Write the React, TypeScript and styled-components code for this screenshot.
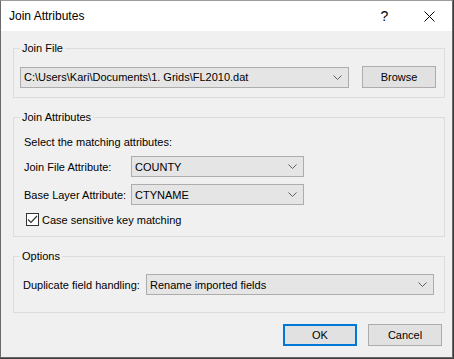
import styled, { createGlobalStyle } from 'styled-components';

const GlobalStyle = createGlobalStyle`
    body {
        margin: 0;
        background: #3c3c3c;
        font-family: "Liberation Sans", Arial, sans-serif;
    }
`

const Window = styled.div`
    width: 453px;
    height: 358px;
    box-sizing: border-box;
    border: 1px solid #6a6a6a;
    border-top-color: #9c9c9c;
    background: #f0f0f0;
    display: flex;
    flex-direction: column;
`

const TitleBar = styled.div`
    height: 30px;
    background: #ffffff;
    display: flex;
    align-items: center;
    flex-shrink: 0;
`

const Title = styled.div`
    flex: 1;
    padding-left: 8px;
    font-size: 12px;
    color: #000;
`

const TitleButton = styled.div`
    width: 45px;
    height: 30px;
    display: flex;
    align-items: center;
    justify-content: center;
    font-size: 14px;
    color: #000;
`

const Body = styled.div`
    flex: 1;
    padding: 10px 9px 0 12px;
    display: flex;
    flex-direction: column;
`

const Group = styled.fieldset<{ $gap?: number }>`
    margin: 0 0 ${props => props.$gap ?? 0}px 0;
    padding: 0;
    border: 1px solid #dcdcdc;
    min-width: 0;
    width: 432px;
    box-sizing: border-box;
`

const Legend = styled.legend`
    font-size: 11px;
    line-height: 14px;
    padding: 0 2px;
    margin-left: 6px;
    color: #000;
`

const FileRow = styled.div`
    display: flex;
    align-items: center;
    gap: 13px;
    padding: 11px 8px 9px 6px;
`

const Combo = styled.div<{ $width?: number }>`
    ${props => props.$width ? `width: ${props.$width}px;` : 'flex: 1;'}
    height: 21px;
    box-sizing: border-box;
    border: 1px solid #adadad;
    background: #e5e5e5;
    display: flex;
    align-items: center;
    padding: 0 6px 0 3px;
    font-size: 11px;
    color: #000;
`

const ComboText = styled.span`
    flex: 1;
    white-space: nowrap;
    overflow: hidden;
`

const Button = styled.div<{ $default?: boolean }>`
    width: 74px;
    height: 22px;
    box-sizing: border-box;
    border: ${props => props.$default ? '2px solid #0078d7' : '1px solid #adadad'};
    background: #e1e1e1;
    display: flex;
    align-items: center;
    justify-content: center;
    font-size: 11px;
    color: #000;
`

const AttrBody = styled.div`
    padding: 12px 10px 10px 10px;
    display: flex;
    flex-direction: column;
`

const Hint = styled.div`
    font-size: 11px;
    color: #000;
    margin-bottom: 8px;
`

const AttrGrid = styled.div`
    display: grid;
    grid-template-columns: 107px 173px;
    row-gap: 7px;
    align-items: center;
    margin-bottom: 8px;
`

const Label = styled.div`
    font-size: 11px;
    color: #000;
    white-space: nowrap;
`

const CheckRow = styled.div`
    display: flex;
    align-items: center;
    gap: 3px;
    padding-left: 2px;
    font-size: 11px;
`

const CheckBox = styled.div`
    width: 13px;
    height: 13px;
    box-sizing: border-box;
    border: 1px solid #333;
    background: #fff;
    display: flex;
    align-items: center;
    justify-content: center;
`

const OptionsRow = styled.div`
    display: flex;
    align-items: center;
    justify-content: space-between;
    padding: 11px 10px 17px 9px;
`

const Footer = styled.div`
    display: flex;
    justify-content: flex-end;
    gap: 11px;
    padding: 11px 1px 0 0;
`

const Chevron = () => (
    <svg width="9" height="5" viewBox="0 0 9 5">
        <path d="M0.5 0.5 L4.5 4.5 L8.5 0.5" fill="none" stroke="#606060" strokeWidth="1" />
    </svg>
)

const Select = ({value, width}: {value: string, width?: number}) => (
    <Combo $width={width}>
        <ComboText>{value}</ComboText>
        <Chevron />
    </Combo>
)

export default function App() {
    return (
        <>
            <GlobalStyle />
            <Window>
                <TitleBar>
                    <Title>Join Attributes</Title>
                    <TitleButton>?</TitleButton>
                    <TitleButton>
                        <svg width="11" height="11" viewBox="0 0 11 11">
                            <path d="M0.5 0.5 L10.5 10.5 M10.5 0.5 L0.5 10.5" stroke="#000" strokeWidth="1" />
                        </svg>
                    </TitleButton>
                </TitleBar>
                <Body>
                    <Group $gap={12}>
                        <Legend>Join File</Legend>
                        <FileRow>
                            <Select value="C:\Users\Kari\Documents\1. Grids\FL2010.dat" />
                            <Button>Browse</Button>
                        </FileRow>
                    </Group>
                    <Group $gap={12}>
                        <Legend>Join Attributes</Legend>
                        <AttrBody>
                            <Hint>Select the matching attributes:</Hint>
                            <AttrGrid>
                                <Label>Join File Attribute:</Label>
                                <Select value="COUNTY" width={173} />
                                <Label>Base Layer Attribute:</Label>
                                <Select value="CTYNAME" width={173} />
                            </AttrGrid>
                            <CheckRow>
                                <CheckBox>
                                    <svg width="11" height="9" viewBox="0 0 11 9">
                                        <path d="M1 4.5 L4 7.5 L10 1" fill="none" stroke="#333" strokeWidth="1.2" />
                                    </svg>
                                </CheckBox>
                                Case sensitive key matching
                            </CheckRow>
                        </AttrBody>
                    </Group>
                    <Group>
                        <Legend>Options</Legend>
                        <OptionsRow>
                            <Label>Duplicate field handling:</Label>
                            <Select value="Rename imported fields" width={288} />
                        </OptionsRow>
                    </Group>
                    <Footer>
                        <Button $default>OK</Button>
                        <Button>Cancel</Button>
                    </Footer>
                </Body>
            </Window>
        </>
    );
}
